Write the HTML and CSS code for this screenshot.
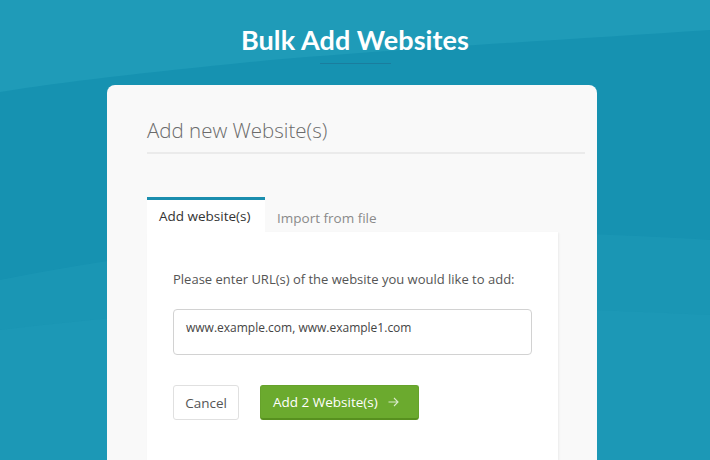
FILE: index.html
```html
<!DOCTYPE html>
<html>
<head>
<meta charset="utf-8">
<link rel="stylesheet" href="styles.css">
</head>
<body>
<svg class="waves" width="710" height="460" viewBox="0 0 710 460" preserveAspectRatio="none">
  <path d="M0 0 H710 V30 C560 40 380 50 250 62 C150 72 60 82 0 92 Z" fill="#1f9bb8"/>
  <path d="M0 280 C150 250 300 235 420 232 C520 230 620 235 710 240 V460 H0 Z" fill="#1b97b5" opacity="0.8"/>
  <path d="M0 330 C200 305 400 300 710 315 V460 H0 Z" fill="#1d9ab7" opacity="0.5"/>
</svg>
<header class="top">
  <h1 class="title">Bulk Add Websites</h1>
  <div class="title-rule"></div>
</header>
<main class="card">
  <h2 class="card-heading">Add new Website(s)</h2>
  <nav class="tabs">
    <div class="tab active">Add website(s)</div>
    <div class="tab">Import from file</div>
  </nav>
  <section class="panel">
    <p class="prompt">Please enter URL(s) of the website you would like to add:</p>
    <div class="url-input">www.example.com, www.example1.com</div>
    <div class="actions">
      <button class="btn btn-cancel">Cancel</button>
      <button class="btn btn-add">Add 2 Website(s)
        <svg class="arrow" width="11" height="10" viewBox="0 0 11 10"><path d="M0.5 5 H10 M6 1 L10 5 L6 9" fill="none" stroke="rgba(255,255,255,0.75)" stroke-width="1.1"/></svg>
      </button>
    </div>
  </section>
</main>
</body>
</html>
```
FILE: styles.css
```css
* { box-sizing: border-box; }
html, body { margin: 0; padding: 0; }
body {
  width: 710px;
  height: 460px;
  overflow: hidden;
  background: #1692b1;
  font-family: "Open Sans", "Noto Sans", sans-serif;
  position: relative;
}
.waves {
  position: absolute;
  left: 0;
  top: 0;
  z-index: 0;
}
.top {
  position: relative;
  z-index: 1;
  display: flex;
  flex-direction: column;
  align-items: center;
  padding-top: 22px;
}
.title {
  margin: 0;
  font-family: "Lato", "Open Sans", sans-serif;
  font-weight: 700;
  font-size: 27px;
  line-height: 36px;
  color: #ffffff;
  letter-spacing: 0.1px;
}
.title-rule {
  width: 71px;
  height: 1px;
  background: #1a7d9e;
  margin-top: 5px;
}
.card {
  position: relative;
  z-index: 1;
  width: 490px;
  margin: 21px 0 0 107px;
  background: #f9f9f9;
  border-radius: 8px 8px 0 0;
  padding: 31px 12px 0 40px;
  height: 375px;
}
.card-heading {
  margin: 0;
  font-weight: 300;
  font-size: 20.5px;
  line-height: 28px;
  color: #6b6b6b;
  padding-bottom: 8px;
  border-bottom: 2px solid #ebebeb;
}
.tabs {
  display: flex;
  margin-top: 43px;
  width: 411px;
}
.tab {
  height: 35px;
  padding: 3px 12px 0;
  display: flex;
  align-items: center;
  font-size: 13.5px;
  color: #8a8a8a;
  border-top: 3px solid transparent;
}
.tab.active {
  width: 118px;
  background: #ffffff;
  border-top-color: #1b8eae;
  color: #333333;
  padding: 0 12px;
}
.panel {
  width: 411px;
  background: #ffffff;
  padding: 37px 26px 0;
  box-shadow: 1px 1px 2px rgba(0, 0, 0, 0.06);
  height: 228px;
}
.prompt {
  margin: 0;
  font-size: 13px;
  line-height: 20px;
  color: #555555;
}
.url-input {
  margin-top: 20px;
  height: 46px;
  border: 1px solid #d2d2d2;
  border-radius: 4px;
  padding: 0 12px 10px;
  display: flex;
  align-items: center;
  font-size: 12px;
  color: #444444;
}
.actions {
  display: flex;
  gap: 21px;
  margin-top: 30px;
}
.btn {
  height: 35px;
  font-family: "Open Sans", "Noto Sans", sans-serif;
  font-size: 13.5px;
  border-radius: 3px;
  padding: 0 12px;
  cursor: pointer;
  display: flex;
  align-items: center;
}
.btn-cancel {
  width: 66px;
  background: #ffffff;
  border: 1px solid #e0e0e0;
  color: #555555;
  justify-content: center;
  padding: 0;
}
.btn-add {
  width: 159px;
  background: #6baa2e;
  border: 1px solid #66a22b;
  border-bottom: 2px solid #57901f;
  color: #ffffff;
  gap: 10px;
}
.arrow {
  display: block;
}
```
